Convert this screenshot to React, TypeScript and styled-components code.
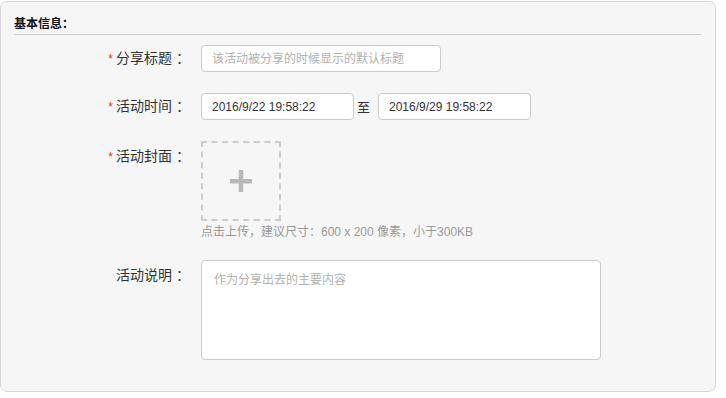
import React from "react";
import styled, { createGlobalStyle } from "styled-components";

const GlobalStyle = createGlobalStyle`
  html, body {
    margin: 0;
    padding: 0;
    background: #fff;
  }
  body {
    font-family: "Liberation Sans", "Noto Sans CJK SC", sans-serif;
    color: #333;
    text-spacing-trim: space-all;
  }
`;

const App: React.FC = () => {
  return (
    <>
      <GlobalStyle />
      <Panel>
        <PanelHeader>基本信息：</PanelHeader>
        <Form>
          <Row $center>
            <Label>
              <Star>*</Star>分享标题<Colon>：</Colon>
            </Label>
            <TextInput type="text" $width={240} placeholder="该活动被分享的时候显示的默认标题" />
          </Row>

          <Row $center>
            <Label>
              <Star>*</Star>活动时间<Colon>：</Colon>
            </Label>
            <TextInput type="text" $width={153} defaultValue="2016/9/22 19:58:22" />
            <Sep>至</Sep>
            <TextInput type="text" $width={153} defaultValue="2016/9/29 19:58:22" />
          </Row>

          <Row>
            <Label $top>
              <Star>*</Star>活动封面<Colon>：</Colon>
            </Label>
            <Field>
              <Upload>
                <svg width="22" height="22" viewBox="0 0 22 22">
                  <rect x="0" y="9" width="22" height="4.5" fill="#b8b8b8" />
                  <rect x="8.75" y="0" width="4.5" height="22" fill="#b8b8b8" />
                </svg>
              </Upload>
              <Hint>点击上传，建议尺寸：600 x 200 像素，小于300KB</Hint>
            </Field>
          </Row>

          <Row>
            <Label $top>
              活动说明<Colon>：</Colon>
            </Label>
            <TextArea placeholder="作为分享出去的主要内容" />
          </Row>
        </Form>
      </Panel>
    </>
  );
};

const Panel = styled.div`
  box-sizing: border-box;
  width: 716px;
  margin-top: 1px;
  background: #f6f6f6;
  border: 1px solid #d6d6d6;
  border-radius: 7px;
  padding-bottom: 31px;
`;

const PanelHeader = styled.div`
  margin: 0 14px 0 13px;
  padding: 13px 0 3px;
  font-family: "Noto Sans CJK SC", sans-serif;
  font-size: 12px;
  line-height: 16px;
  font-weight: bold;
  color: #111;
  border-bottom: 1px solid #cfcfcf;
`;

const Form = styled.div`
  display: flex;
  flex-direction: column;
  gap: 21px;
  padding-top: 10px;
`;

const Row = styled.div<{ $center?: boolean }>`
  display: flex;
  align-items: ${(p) => (p.$center ? "center" : "flex-start")};
`;

const Label = styled.div<{ $top?: boolean }>`
  width: 185px;
  height: ${(p) => (p.$top ? "30px" : "27px")};
  margin-right: 15px;
  flex-shrink: 0;
  text-align: right;
  font-size: 14px;
  line-height: ${(p) => (p.$top ? "30px" : "27px")};
  color: #333;
  white-space: nowrap;
`;

const Colon = styled.span`
  margin-left: 4px;
  margin-right: -4px;
`;

const Star = styled.span`
  color: #e8322b;
  font-family: "Liberation Sans", sans-serif;
  font-size: 12px;
  margin-right: 3px;
`;

const TextInput = styled.input<{ $width: number }>`
  box-sizing: border-box;
  width: ${(p) => p.$width}px;
  height: 27px;
  padding: 0 10px;
  border: 1px solid #cccccc;
  border-radius: 4px;
  background: #fff;
  font-family: "Liberation Sans", "Noto Sans CJK SC", sans-serif;
  font-size: 12px;
  color: #333;
  outline: none;

  &::placeholder {
    color: #b0b0b0;
  }
`;

const Sep = styled.span`
  margin: 0 8px 0 3px;
  font-size: 13px;
  color: #333;
`;

const Field = styled.div`
  display: flex;
  flex-direction: column;
`;

const Upload = styled.div`
  box-sizing: border-box;
  width: 80px;
  height: 80px;
  border: 2px dashed #cccccc;
  display: flex;
  align-items: center;
  justify-content: center;
  cursor: pointer;
`;

const Hint = styled.div`
  margin-top: 4px;
  font-size: 12px;
  line-height: 14px;
  color: #999;
`;

const TextArea = styled.textarea`
  box-sizing: border-box;
  width: 400px;
  height: 100px;
  padding: 10px 12px;
  border: 1px solid #cccccc;
  border-radius: 4px;
  background: #fff;
  resize: none;
  font-family: "Liberation Sans", "Noto Sans CJK SC", sans-serif;
  font-size: 12px;
  line-height: 18px;
  color: #333;
  outline: none;

  &::placeholder {
    color: #b0b0b0;
  }
`;

export default App;
